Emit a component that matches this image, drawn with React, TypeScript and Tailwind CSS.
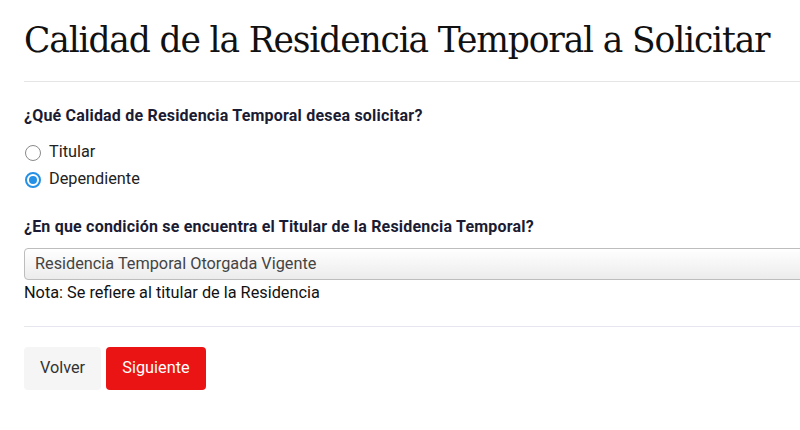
import React from "react";

function Radio({ checked, label }: { checked?: boolean; label: string }) {
  return (
    <label className="flex items-center gap-2 h-[27px] pl-px">
      {checked ? (
        <span className="w-4 h-4 rounded-full border-2 border-[#2490e6] flex items-center justify-center">
          <span className="w-[8px] h-[8px] rounded-full bg-[#2490e6]" />
        </span>
      ) : (
        <span className="w-4 h-4 rounded-full border-[1.5px] border-[#8a8a8a] bg-white" />
      )}
      <span className="text-[16.3px] text-[#222]">{label}</span>
    </label>
  );
}

export default function App() {
  return (
    <div className="w-screen h-screen overflow-hidden bg-white" style={{ fontFamily: "Roboto, 'Liberation Sans', sans-serif" }}>
      <div className="w-[860px] pl-6 pt-[14px]">
        <h1 className="text-[34.5px] leading-[52px] text-[#111] tracking-[-1.15px]" style={{ fontFamily: "'DejaVu Serif', 'Liberation Serif', serif" }}>
          Calidad de la Residencia Temporal a Solicitar
        </h1>
        <hr className="mt-[15px] border-t border-[#e5e5e5]" />

        <p className="mt-[22px] text-[16px] tracking-[0.2px] font-bold text-[#1b1c33]">¿Qué Calidad de Residencia Temporal desea solicitar?</p>
        <div className="mt-[11px] flex flex-col">
          <Radio label="Titular" />
          <Radio checked label="Dependiente" />
        </div>

        <p className="mt-[22px] text-[16px] tracking-[0.2px] font-bold text-[#1b1c33]">¿En que condición se encuentra el Titular de la Residencia Temporal?</p>
        <div className="mt-[9px] h-[32px] flex items-center px-[10px] rounded-[4px] border border-[#bdbdbd] bg-gradient-to-b from-white to-[#ececec] text-[16.3px] text-[#444]">
          Residencia Temporal Otorgada Vigente
        </div>
        <p className="text-[16.3px] text-[#111] leading-[26px]">Nota: Se refiere al titular de la Residencia</p>

        <hr className="mt-[20px] border-t border-[#e6e6ee]" />

        <div className="mt-[20px] flex gap-[5px]">
          <button className="h-[43px] w-[77px] rounded-[4px] bg-[#f5f5f5] text-[16.3px] text-[#333]">Volver</button>
          <button className="h-[43px] w-[100px] rounded-[4px] bg-[#eb1414] text-[16.3px] text-white">Siguiente</button>
        </div>
      </div>
    </div>
  );
}
